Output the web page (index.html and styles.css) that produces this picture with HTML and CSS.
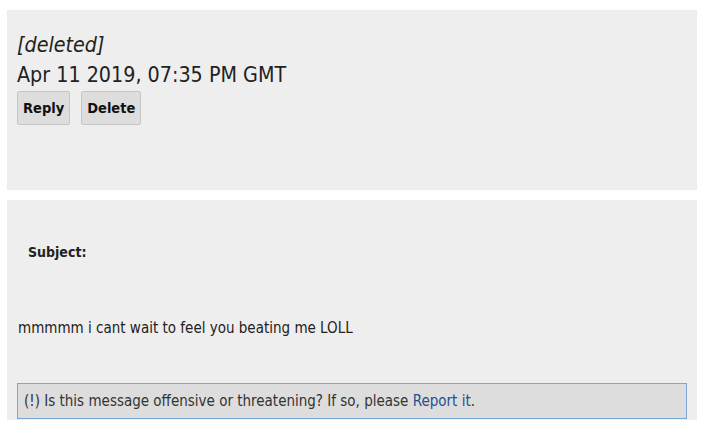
FILE: index.html
```html
<!DOCTYPE html>
<html>
<head>
<meta charset="utf-8">
<link rel="stylesheet" href="styles.css">
</head>
<body>
<div class="page">
  <div class="card card-top">
    <div class="author">[deleted]</div>
    <div class="date">Apr 11 2019, 07:35 PM GMT</div>
    <div class="actions">
      <button class="btn">Reply</button>
      <button class="btn">Delete</button>
    </div>
  </div>
  <div class="card card-msg">
    <div class="subject">Subject:</div>
    <div class="body">mmmmm i cant wait to feel you beating me LOLL</div>
    <div class="report">(!) Is this message offensive or threatening? If so, please <a class="report-link" href="#">Report it</a>.</div>
  </div>
</div>
</body>
</html>
```
FILE: styles.css
```css
html, body {
  margin: 0;
  padding: 0;
  background: #ffffff;
}
body {
  font-family: "DejaVu Sans Condensed", "DejaVu Sans", sans-serif;
  color: #222222;
}
.page {
  padding: 10px 16px 0 7px;
  display: flex;
  flex-direction: column;
  gap: 10px;
}
.card {
  background: #eeeeee;
  box-sizing: border-box;
}
.card-top {
  height: 180px;
  padding: 20px 10px 0 10px;
}
.author {
  font-style: italic;
  font-size: 21.3px;
  line-height: 30px;
}
.date {
  font-size: 21.3px;
  line-height: 30px;
}
.actions {
  display: flex;
  gap: 11px;
  margin-top: 1px;
}
.btn {
  font-family: inherit;
  font-weight: bold;
  font-size: 14.5px;
  color: #111111;
  background: #dddddd;
  border: 1px solid #c6c6c6;
  border-radius: 2px;
  height: 34px;
  padding: 0 5px;
}
.card-msg {
  height: 220px;
  padding: 42px 10px 0 10px;
  display: flex;
  flex-direction: column;
}
.subject {
  font-weight: bold;
  font-size: 14px;
  line-height: 20px;
  padding-left: 11px;
}
.body {
  font-size: 15px;
  line-height: 20px;
  margin-top: 56px;
  padding-left: 1px;
}
.report {
  margin-top: 45px;
  font-size: 15px;
  line-height: 20px;
  color: #333333;
  background: #dddddd;
  border: 1px solid #7ba7d6;
  padding: 7px 6px;
}
.report-link {
  color: #2a4d8f;
  text-decoration: none;
}
```
